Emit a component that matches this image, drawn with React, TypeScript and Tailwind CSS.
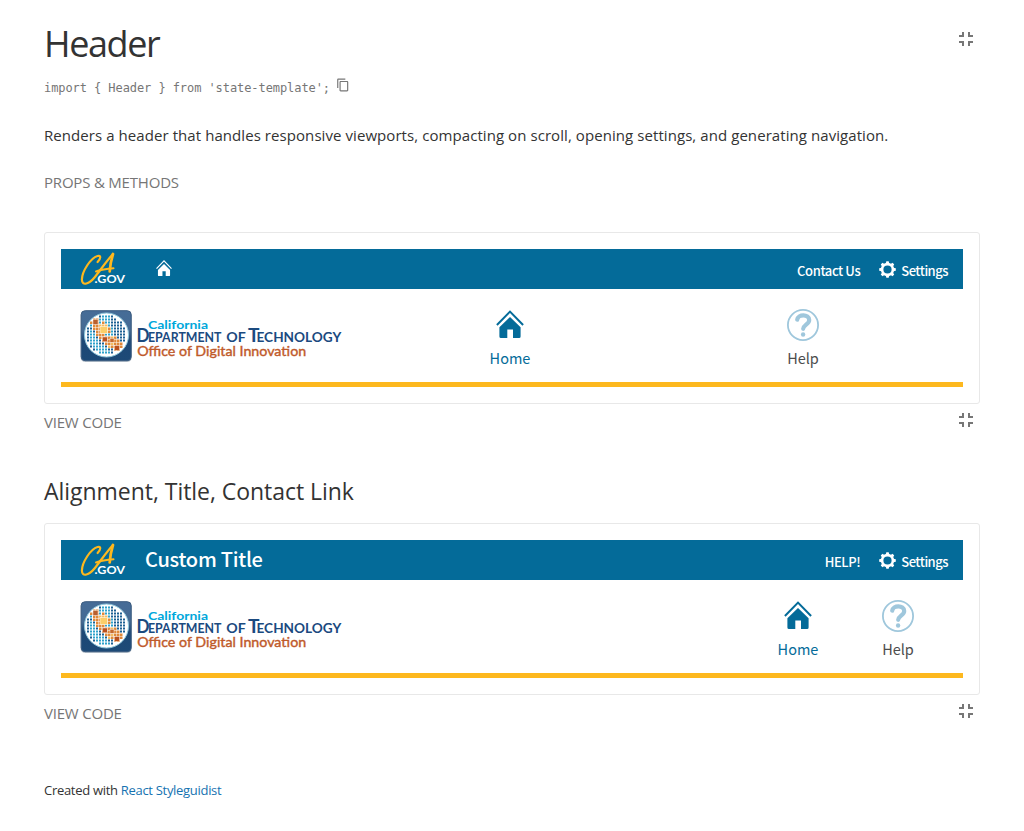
import React from 'react';

const SEGOE = "font-['Open_Sans','Noto_Sans',sans-serif]";
const SOURCE = "font-['Noto_Sans_CJK_SC','Noto_Sans_CJK_JP',sans-serif]";

function CollapseIcon() {
  return (
    <svg width="24" height="24" viewBox="0 0 24 24" fill="#767676" shapeRendering="crispEdges" aria-hidden="true">
      <path d="M5 16h3v3h2v-5H5v2zm3-8H5v2h5V5H8v3zm6 11h2v-3h3v-2h-5v5zm2-11V5h-2v5h5V8h-3z" />
    </svg>
  );
}

function CopyIcon() {
  return (
    <svg width="14" height="14" viewBox="0 0 24 24" fill="#767676" aria-hidden="true">
      <path d="M16 1H4c-1.100 0-2 .9-2 2v14h2V3h12V1zm3 4H8c-1.100 0-2 .9-2 2v14c0 1.100.9 2 2 2h11c1.100 0 2-.9 2-2V7c0-1.100-.9-2-2-2zm0 16H8V7h11v14z" />
    </svg>
  );
}

function HomeIcon({ size, className }: { size: number; className: string }) {
  return (
    <svg width={size} height={size} viewBox="0 0 28 28" className={className} aria-hidden="true">
      <path d="M0.900 15 L14 1.600 L27.100 15" fill="none" stroke="currentColor" strokeWidth="2" />
      <path d="M14 7 L24.600 17.300 V26.500 Q24.600 28 23.100 28 H17 V19.500 H11.300 V28 H4.900 Q3.400 28 3.400 26.500 V17.300 Z" fill="currentColor" />
    </svg>
  );
}

function HelpIcon() {
  return (
    <svg width="32" height="32" viewBox="0 0 32 32" fill="none" stroke="#9fc7dc" aria-hidden="true">
      <circle cx="16" cy="16" r="15.100" strokeWidth="1.800" />
      <path d="M10.200 10.700 C10.700 4.900 22.200 4.700 22.200 10.900 C22.200 15.300 16.300 15.800 16.200 19.800" strokeWidth="4.200" strokeLinecap="round" />
      <circle cx="16.100" cy="25.500" r="2.200" fill="#9fc7dc" stroke="none" />
    </svg>
  );
}

function GearIcon() {
  return (
    <svg width="17" height="17" viewBox="0 0 17 17" fill="none" stroke="#fff" aria-hidden="true">
      <circle cx="8.500" cy="8.500" r="5.400" strokeWidth="2.600" />
      {[0, 45, 90, 135, 180, 225, 270, 315].map((a) => (
        <path key={a} d="M6.700 2.800 L7.300 0.200 H9.700 L10.300 2.800 Z" fill="#fff" stroke="none" transform={`rotate(${a} 8.500 8.500)`} />
      ))}
    </svg>
  );
}

function CaGovLogo() {
  return (
    <svg width="46" height="34" viewBox="0 0 46 34" className="shrink-0 overflow-visible" role="img" aria-label="CA.gov">
      <g fill="none" stroke="#fdb81e" strokeLinecap="round" strokeLinejoin="round">
        <path d="M17.600 10 C21 6.500 21.300 3 17.500 4 C10.500 6 2 19.500 1.900 27.500 C2 35 9.500 31.500 14.500 25.500 C20.500 18 26.500 9 33 2" strokeWidth="2.200" />
        <path d="M33 2 C31.300 7.500 30.100 13 29.700 19.500" strokeWidth="2.700" />
        <path d="M16 19.500 C20.500 17.900 26.500 16.800 33.500 16.300" strokeWidth="2" />
      </g>
      <text x="14.500" y="31" textLength="30.500" lengthAdjust="spacingAndGlyphs" fill="#fff" fontFamily="Lato, sans-serif" fontWeight="700" fontSize="11.800">
        .GOV
      </text>
    </svg>
  );
}

const MAP_ROWS = [
  '....bcccb....',
  '..ooccccbb...',
  '.ooococcbbbb.',
  '.cooyyycbbbb.',
  'bboooyyocbbbb',
  'bcboooyocbbbb',
  'bccooocccbbbb',
  'bccbooooyobbb',
  'bcccboooooobb',
  '.cccbbooyooo.',
  '.bccccbyoooo.',
  '..bccccbboo..',
  '....ccccb....',
];
const MAP_COLORS: Record<string, string> = { b: '#1c6093', c: '#2fa3cb', o: '#e0893a', y: '#f3bb62' };

function TechnologyLogo() {
  return (
    <svg width="264" height="54" viewBox="0 0 264 54" className="shrink-0 overflow-visible" role="img" aria-label="California Department of Technology">
      <defs>
        <linearGradient id="badge" x1="0" y1="0" x2="0" y2="1">
          <stop offset="0" stopColor="#466c97" />
          <stop offset="0.400" stopColor="#456b94" />
          <stop offset="0.600" stopColor="#1c4876" />
          <stop offset="1" stopColor="#1d4a77" />
        </linearGradient>
      </defs>
      <rect x="0.600" y="2" width="51.200" height="51" rx="4.500" fill="#8f9fae" opacity="0.600" />
      <rect x="1.200" y="1.700" width="50" height="50" rx="4" fill="url(#badge)" stroke="#3b5c80" />
      <circle cx="26.500" cy="26" r="22" fill="#fff" stroke="#8fc8dd" strokeWidth="1" />
      {MAP_ROWS.flatMap((row, y) =>
        row.split('').map((c, x) => {
          const s = c === 'b' || c === 'c' ? 2 : 2.500;
          return c === '.' ? null : <rect key={`${x}-${y}`} x={7 + x * 3} y={6.500 + y * 3} width={s} height={s} fill={MAP_COLORS[c]} />;
        }),
      )}
      <rect x="13" y="10.500" width="5" height="5" fill="#b9602e" stroke="#fff" strokeWidth="0.400" />
      <rect x="20" y="17.500" width="7.500" height="7" fill="#fbce69" stroke="#fff" strokeWidth="0.500" />
      <rect x="22.500" y="28" width="4.700" height="4.700" fill="#b9501f" stroke="#fff" strokeWidth="0.400" />
      <rect x="30" y="29.300" width="4" height="4" fill="#c4682e" stroke="#fff" strokeWidth="0.400" />
      <rect x="34.500" y="36.500" width="5" height="4.700" fill="#b9501f" stroke="#fff" strokeWidth="0.400" />
      <g fontFamily="Lato, sans-serif" fontWeight="700">
        <text x="68" y="20.200" textLength="60" lengthAdjust="spacingAndGlyphs" fontSize="11.500" fill="#00a7db">California</text>
        <g fill="#1b4a7f">
          <text x="56.500" y="33" textLength="13" lengthAdjust="spacingAndGlyphs" fontSize="19">D</text>
          <text x="68" y="33" textLength="73.500" lengthAdjust="spacingAndGlyphs" fontSize="14">EPARTMENT</text>
          <text x="146.300" y="33" textLength="19.500" lengthAdjust="spacingAndGlyphs" fontSize="14">OF</text>
          <text x="168" y="33" textLength="11.500" lengthAdjust="spacingAndGlyphs" fontSize="19">T</text>
          <text x="176.500" y="33" textLength="84.800" lengthAdjust="spacingAndGlyphs" fontSize="14">ECHNOLOGY</text>
        </g>
        <text x="57.200" y="46.700" textLength="169" lengthAdjust="spacingAndGlyphs" fontSize="14" fontWeight="400" fill="#bf5a2a" stroke="#bf5a2a" strokeWidth="0.400">Office of Digital Innovation</text>
      </g>
    </svg>
  );
}

function NavItem({ label, width, home }: { label: string; width: string; home?: boolean }) {
  return (
    <a className={`flex flex-col items-center ${width} ${home ? 'text-[#046b99]' : 'text-[#4d4d4d]'}`}>
      <span className="flex h-8 items-start">{home ? <span className="mt-px"><HomeIcon size={28} className="text-[#046b99]" /></span> : <HelpIcon />}</span>
      <span className="mt-[6px] text-[14.5px] leading-[22px]">{label}</span>
    </a>
  );
}

function SiteHeader({ title, contact, end }: { title?: string; contact: string; end?: boolean }) {
  return (
    <div className={`flex h-[138px] flex-col border-b-[5px] border-[#fdb81e] ${SOURCE}`}>
      <div className="flex h-10 items-center bg-[#046b99] pr-[15px] pl-[19px] text-[13px] text-white">
        <CaGovLogo />
        {title ? (
          <span className="ml-[19px] pb-[2px] text-[20px] leading-[38px] font-medium tracking-[-0.25px]">{title}</span>
        ) : (
          <HomeIcon size={16} className="mb-[2px] ml-[30px] text-white" />
        )}
        <span className="ml-auto pt-[3px] leading-5 font-medium tracking-[-0.4px]">{contact}</span>
        <span className="ml-[19px]"><GearIcon /></span>
        <span className="ml-[5px] pt-[3px] leading-5 font-medium tracking-[-0.5px]">Settings</span>
      </div>
      <div className="flex h-[93px] justify-between pt-5 pl-[19px]">
        <TechnologyLogo />
        <nav className={`flex ${end ? 'pr-[15px]' : 'pr-[13.5px]'}`}>
          <NavItem label="Home" width={end ? 'w-[100px]' : 'w-[293px]'} home />
          <NavItem label="Help" width={end ? 'w-[100px]' : 'w-[293px]'} />
        </nav>
      </div>
    </div>
  );
}

function Preview({ children }: { children: React.ReactNode }) {
  return (
    <>
      <div className="rounded-[3px] border border-[#e8e8e8] p-4">{children}</div>
      <div className="flex h-9 items-start justify-between pr-[2px]">
        <button className="mt-[7px] text-[15px] leading-[22px] tracking-[-0.2px] text-[#767676]">VIEW CODE</button>
        <span className="mt-[4px]"><CollapseIcon /></span>
      </div>
    </>
  );
}

export default function App() {
  return (
    <main className={`min-h-[831px] w-[1024px] bg-white pt-5 pr-11 pl-11 text-[#333] ${SEGOE}`}>
      <header className="flex h-12 items-start justify-between pr-[2px]">
        <h1 className="text-[36px] leading-[48px] font-normal tracking-[-1.4px]">Header</h1>
        <span className="mt-[7px]"><CollapseIcon /></span>
      </header>
      <div className="mt-2 flex h-6 gap-[6px] text-[#767676]">
        <code className="font-['DejaVu_Sans_Mono',monospace] text-[12px] leading-6 tracking-[-0.075px]">{"import { Header } from 'state-template';"}</code>
        <span className="mt-[2px]"><CopyIcon /></span>
      </div>
      <p className="mt-[23px] h-[25px] text-[15px] leading-6 tracking-[0.07px] whitespace-nowrap">
        Renders a header that handles responsive viewports, compacting on scroll, opening settings, and generating navigation.
      </p>
      <button className="mt-[22px] block h-[23px] text-[15px] leading-[22px] tracking-[-0.2px] text-[#767676]">PROPS &amp; METHODS</button>
      <section className="mt-[39px]">
        <Preview><SiteHeader contact="Contact Us" /></Preview>
      </section>
      <section className="mt-[34px]">
        <h2 className="mb-[15px] h-[34px] text-[23px] leading-[34px] font-normal tracking-[-0.04px]">Alignment, Title, Contact Link</h2>
        <Preview><SiteHeader title="Custom Title" contact="HELP!" end /></Preview>
      </section>
      <footer className="mt-[49px] text-[13px] leading-5 tracking-[-0.3px]">
        Created with <a className="text-[#1673b1]">React Styleguidist</a>
      </footer>
    </main>
  );
}
